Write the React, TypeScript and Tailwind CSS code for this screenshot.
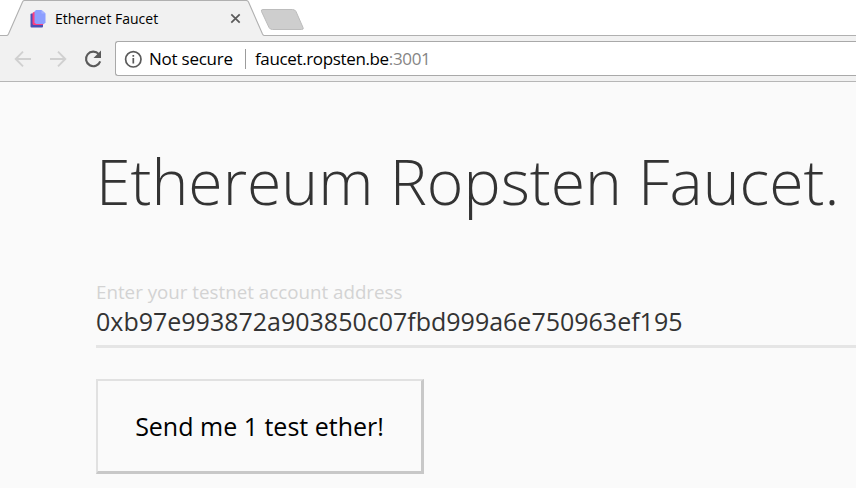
function TabStrip() {
  return (
    <div className="relative h-9 shrink-0 bg-white">
      <svg className="absolute inset-0 h-9 w-full" width="856" height="36" viewBox="0 0 856 36" fill="none">
        <path d="M0 35.5H6.5C7.5 35.5 8 35 8.500 34L22.500 2C23 1 23.500 .5 24.500 .5H246C247.300 .5 248 1 248.500 2L262.500 34C263 35 263.500 35.500 264.500 35.500H856V36H0Z" fill="#f1f1f1" />
        <path d="M0 35.5H6.500C7.500 35.500 8 35 8.500 34L22.500 2C23 1 23.500 .5 24.500 .5H246C247.300 .5 248 1 248.500 2L262.500 34C263 35 263.500 35.500 264.500 35.500H856" stroke="#b0b0b0" strokeWidth="1.100" />
        <path d="M263 9.500H292.500Q295 9.500 296 11.500L303 27.500Q304 29.500 301.500 29.500H272.500Q270 29.500 269 27.500L261.500 11.500Q260.700 9.500 263 9.500Z" fill="#cecece" stroke="#bcbcbc" />
      </svg>
      <div className="relative flex h-9 w-[241px] items-center pt-px pl-[30px]">
        <svg width="17" height="20" viewBox="0 0 17 20" className="shrink-0">
          <path d="M.5 5.500Q.5 4.500 1.500 4.500H9.500L13 15V17.500Q13 18.500 12 18.500H1.500Q.5 18.500 .5 17.500Z" fill="#4a50b5" />
          <path d="M2.500 4.500Q2.500 3 4 3H11V11H13.500V14.500Q13.500 16 12 16H4Q2.500 16 2.500 14.500Z" fill="#ff3d7f" />
          <path d="M6 1H11.500L15.500 4.500V13.500L14 15H6L4.500 13.500V2.500Z" fill="#8c9eff" />
          <path d="M11.500 1V4.500H15.500Z" fill="#a3b1ff" />
        </svg>
        <span className="ml-2 whitespace-nowrap text-[14px] leading-5 text-black">Ethernet Faucet</span>
        <svg className="ml-auto shrink-0" width="11" height="11" viewBox="0 0 11 11" fill="none" stroke="#5a5a5a" strokeWidth="1.700">
          <path d="M1.300 1.300L9.700 9.700M9.700 1.300L1.300 9.700" />
        </svg>
      </div>
    </div>
  );
}

function Toolbar() {
  return (
    <div className="flex h-[46px] shrink-0 items-center border-b border-[#b6b6b6] bg-[#f1f1f1] pl-[14px]">
      <svg width="18" height="18" viewBox="0 0 18 18" fill="none" stroke="#d0d0d0" strokeWidth="1.900">
        <path d="M17 9H2M9 1.700L1.700 9L9 16.300" />
      </svg>
      <svg className="ml-[17px]" width="18" height="18" viewBox="0 0 18 18" fill="none" stroke="#d0d0d0" strokeWidth="1.900">
        <path d="M1 9H16M9 1.700L16.300 9L9 16.300" />
      </svg>
      <svg className="ml-[16px]" width="20" height="20" viewBox="0 0 20 20" fill="none">
        <path d="M15.800 5.100A7.300 7.300 0 1 0 17.200 12.300" stroke="#5a5a5a" strokeWidth="2.100" />
        <path d="M18 1.500V9H10.500Z" fill="#5a5a5a" />
      </svg>
      <div className="ml-3 flex h-[35px] min-w-0 flex-1 items-center rounded-l-[3px] border border-r-0 border-[#a9a9a9] bg-white pl-2 text-[17px] leading-6">
        <svg className="shrink-0" width="18" height="18" viewBox="0 0 18 18" fill="none">
          <circle cx="9.300" cy="9.300" r="7.700" stroke="#5a5a5a" strokeWidth="1.700" />
          <path d="M9.300 8V13.500M9.300 5V6.700" stroke="#5a5a5a" strokeWidth="1.700" />
        </svg>
        <span className="ml-[7px] w-[84px] whitespace-nowrap tracking-[-0.24px] text-black">Not secure</span>
        <span className="ml-3 h-5 w-px bg-[#9c9c9c]" />
        <span className="ml-[9px] whitespace-nowrap tracking-[-0.36px] text-black">
          faucet.ropsten.be<span className="text-[#858585]">:3001</span>
        </span>
      </div>
    </div>
  );
}

export default function App() {
  return (
    <div className="flex h-[488px] w-[856px] flex-col overflow-hidden bg-[#fafafa] font-['Open_Sans','Noto_Sans',sans-serif]">
      <TabStrip />
      <Toolbar />
      <main className="flex flex-1 flex-col items-start pl-24 text-[#333]">
        <h1 className="mt-[55px] whitespace-nowrap text-[62.500px] leading-[88px] font-light">Ethereum Ropsten Faucet.</h1>
        <label className="mt-[55px] text-[18.750px] leading-[24px] text-[#d3d3d3]">Enter your testnet account address</label>
        <div className="flex h-[44px] w-full items-start border-b-[3px] border-[#e5e5e5] whitespace-nowrap text-[25px] leading-[34px]">
          <span>0xb97e993872a903850c07fbd999a6e750963ef195</span>
        </div>
        <button className="mt-[31px] flex h-[95px] w-[328px] items-center justify-center border-t-2 border-r-[3px] border-b-[3px] border-l-2 border-t-[#e1e1e1] border-r-[#c8c8c8] border-b-[#c8c8c8] border-l-[#e1e1e1] text-[25px] leading-[34px] whitespace-nowrap text-black">
          Send me 1 test ether!
        </button>
      </main>
    </div>
  );
}
